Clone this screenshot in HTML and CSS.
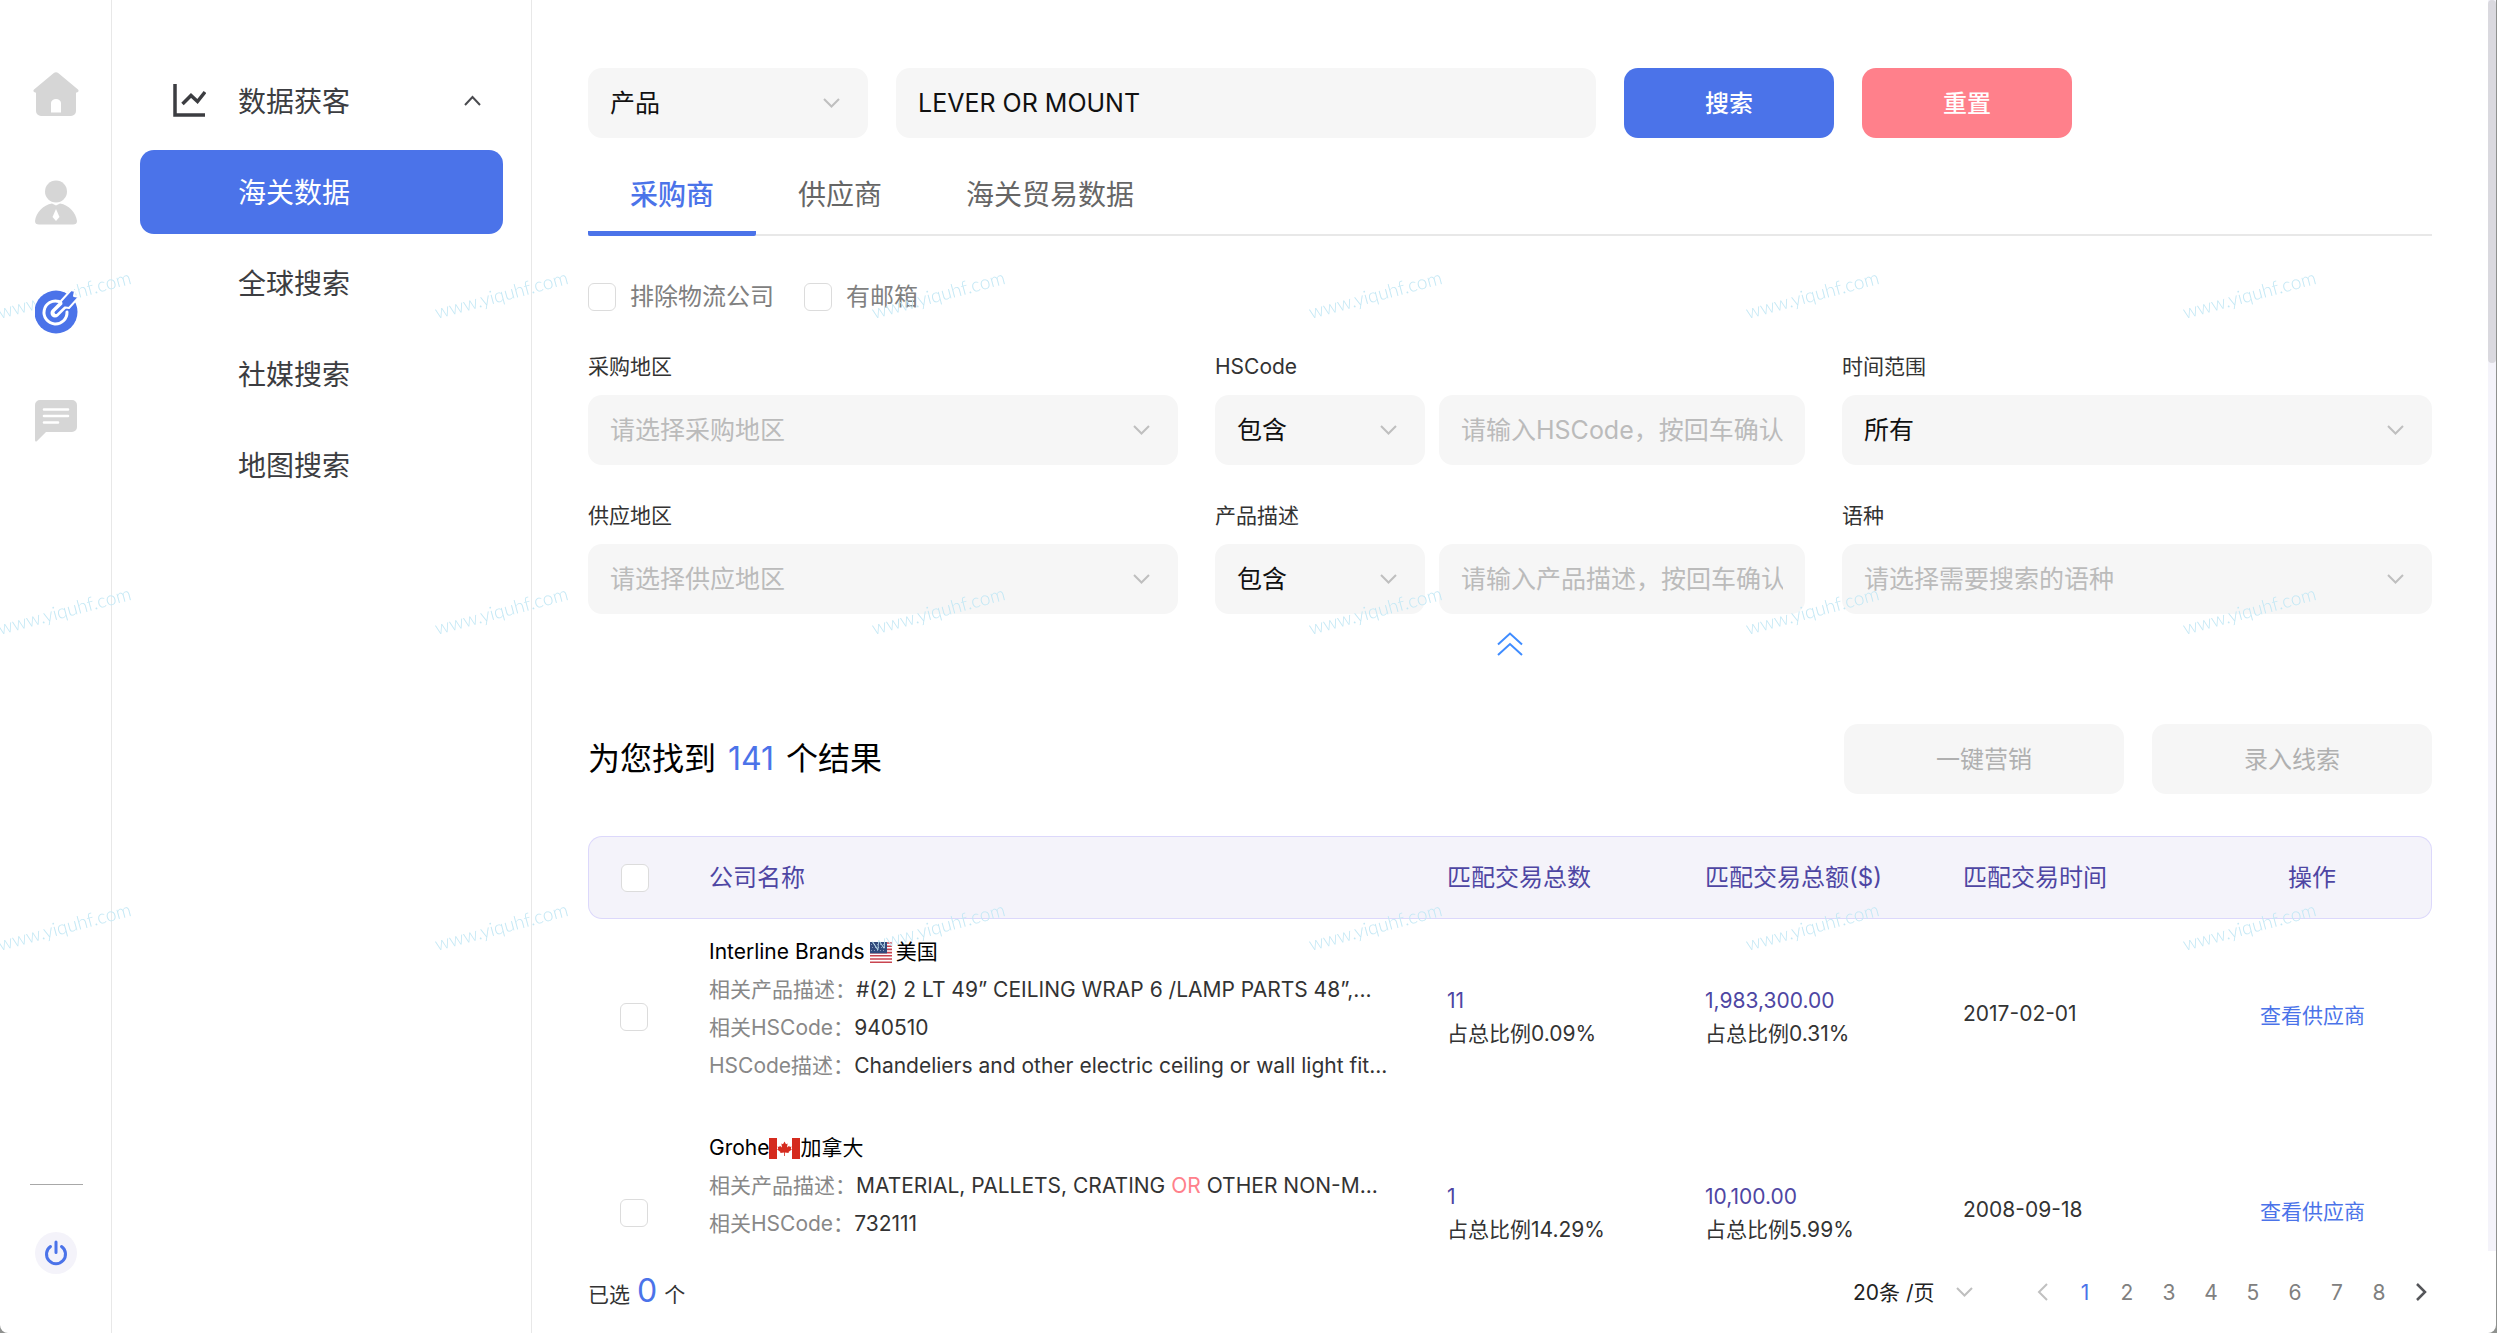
FILE: index.html
```html
<!DOCTYPE html>
<html lang="zh-CN">
<head>
<meta charset="utf-8">
<meta name="viewport" content="width=device-width, initial-scale=1">
<title>海关数据</title>
<link rel="stylesheet" href="styles.css">
</head>
<body>
<div class="app">
  <nav class="rail" aria-label="主导航">
    <a class="rail-link" href="#" aria-label="首页"><svg width="46" height="44" viewBox="0 0 46 44"><path fill="#d6d6d6" fill-rule="evenodd" d="M20.500 1.200a4 4 0 0 1 5 0L45 17.500q1.200 1.300 0 2.500l-2 .8V39a5 5 0 0 1-5 5H8a5 5 0 0 1-5-5V20.800L1 20q-1.200-1.200 0-2.500zM18 40.500h10V31a5 4 0 0 0-10 0z"/></svg></a>
    <a class="rail-link" href="#" aria-label="客户"><svg width="42" height="45" viewBox="0 0 42 45"><circle cx="21" cy="11.500" r="11" fill="#d6d6d6"/><path fill="#d6d6d6" fill-rule="evenodd" d="M17 23.500l4 2 4-2C34 25 41 33 42 41q0 3.500-4 3.500H4q-4 0-4-3.500C1 33 8 25 17 23.500zM21 29l-3.500 8 3.500 4 3.500-4z"/></svg></a>
    <a class="rail-link" href="#" aria-label="获客"><svg width="43" height="44" viewBox="0 0 43 44"><circle cx="21" cy="22" r="21.500" fill="#4b73e9"/><path d="M24 11.500A11.500 11.500 0 1 0 32 22" fill="none" stroke="#fff" stroke-width="3" stroke-linecap="round"/><path d="M20 23L31 12" stroke="#fff" stroke-width="9" stroke-linecap="round"/><path d="M26 11L36 0l4 1-1 5 5 1-10 11-7-1z" fill="#4b73e9" stroke="#fff" stroke-width="2" stroke-linejoin="round"/><path d="M21 22.500L33 11" stroke="#4b73e9" stroke-width="3" stroke-linecap="round"/></svg></a>
    <a class="rail-link" href="#" aria-label="消息"><svg width="42" height="42" viewBox="0 0 42 42"><path fill="#d6d6d6" d="M5 0h32a5 5 0 0 1 5 5v22a5 5 0 0 1-5 5H11L1.500 41.500Q0 42 0 40V5a5 5 0 0 1 5-5z"/><path d="M9 9.500h24M9 16h24M9 22.500h14" stroke="#fff" stroke-width="2.600" stroke-linecap="round"/></svg></a>
    <div class="rail-foot">
      <hr class="rail-rule">
      <button class="power" type="button" aria-label="退出"><svg width="24" height="26" viewBox="0 0 24 26"><path d="M6.500 6.500a9.500 9.500 0 1 0 11 0M12 2v10.500" fill="none" stroke="#4b73e9" stroke-width="3" stroke-linecap="round"/></svg></button>
    </div>
  </nav>

  <aside class="menu">
    <button class="menu-head" type="button">
      <svg class="menu-icon" width="33" height="33" viewBox="0 0 33 33"><path d="M2 0v31h30" fill="none" stroke="#3c3d41" stroke-width="3.500"/><path d="M9.500 20L18 11.500l6.500 6L32 8" fill="none" stroke="#3c3d41" stroke-width="3.500"/></svg>
      <span>数据获客</span>
      <svg class="menu-arrow" width="17" height="11" viewBox="0 0 17 11"><path d="M1 10l7.500-8L16 10" fill="none" stroke="#4a4b4f" stroke-width="2"/></svg>
    </button>
    <a class="menu-item menu-item-on" href="#">海关数据</a>
    <a class="menu-item" href="#">全球搜索</a>
    <a class="menu-item" href="#">社媒搜索</a>
    <a class="menu-item" href="#">地图搜索</a>
  </aside>

  <main class="main">
    <div class="scroller">
      <div class="content">
        <form class="search">
          <span class="pick search-kind"><select class="field" aria-label="搜索类型"><option>产品</option></select><svg class="caret" viewBox="0 0 17 10"><path d="M1 1l7.500 7.500L16 1"/></svg></span>
          <input class="field search-text" type="text" aria-label="关键词" value="LEVER OR MOUNT">
          <button class="btn btn-primary" type="button">搜索</button>
          <button class="btn btn-reset" type="reset">重置</button>
        </form>

        <div class="tabs" role="tablist">
          <button class="tab tab-on" type="button" role="tab" aria-selected="true">采购商</button>
          <button class="tab" type="button" role="tab">供应商</button>
          <button class="tab" type="button" role="tab">海关贸易数据</button>
        </div>

        <div class="checks">
          <label class="check"><input class="box" type="checkbox">排除物流公司</label>
          <label class="check"><input class="box" type="checkbox">有邮箱</label>
        </div>

        <div class="filters">
          <div class="filter">
            <label class="filter-name" for="buy-area">采购地区</label>
            <span class="pick"><select class="field field-empty" id="buy-area"><option>请选择采购地区</option></select><svg class="caret" viewBox="0 0 17 10"><path d="M1 1l7.500 7.500L16 1"/></svg></span>
          </div>
          <div class="filter">
            <label class="filter-name" for="hscode">HSCode</label>
            <div class="pair">
              <span class="pick"><select class="field" aria-label="HSCode 条件"><option>包含</option></select><svg class="caret" viewBox="0 0 17 10"><path d="M1 1l7.500 7.500L16 1"/></svg></span>
              <input class="field" id="hscode" type="text" placeholder="请输入HSCode，按回车确认">
            </div>
          </div>
          <div class="filter">
            <label class="filter-name" for="period">时间范围</label>
            <span class="pick"><select class="field" id="period"><option>所有</option></select><svg class="caret" viewBox="0 0 17 10"><path d="M1 1l7.500 7.500L16 1"/></svg></span>
          </div>
          <div class="filter">
            <label class="filter-name" for="sell-area">供应地区</label>
            <span class="pick"><select class="field field-empty" id="sell-area"><option>请选择供应地区</option></select><svg class="caret" viewBox="0 0 17 10"><path d="M1 1l7.500 7.500L16 1"/></svg></span>
          </div>
          <div class="filter">
            <label class="filter-name" for="product">产品描述</label>
            <div class="pair">
              <span class="pick"><select class="field" aria-label="产品描述 条件"><option>包含</option></select><svg class="caret" viewBox="0 0 17 10"><path d="M1 1l7.500 7.500L16 1"/></svg></span>
              <input class="field" id="product" type="text" placeholder="请输入产品描述，按回车确认">
            </div>
          </div>
          <div class="filter">
            <label class="filter-name" for="language">语种</label>
            <span class="pick"><select class="field field-empty" id="language"><option>请选择需要搜索的语种</option></select><svg class="caret" viewBox="0 0 17 10"><path d="M1 1l7.500 7.500L16 1"/></svg></span>
          </div>
        </div>
        <button class="fold" type="button" aria-label="收起筛选"><svg width="26" height="24" viewBox="0 0 26 24"><path d="M1 12.500L13 1.500l12 11M1 23l12-11 12 11" fill="none" stroke="#3f8cff" stroke-width="2"/></svg></button>

        <div class="result">
          <h1 class="result-title">为您找到<span class="result-count">141</span>个结果</h1>
          <button class="btn btn-off" type="button" disabled>一键营销</button>
          <button class="btn btn-off" type="button" disabled>录入线索</button>
        </div>

        <table class="list">
          <colgroup><col class="col-check"><col><col class="col-data"><col class="col-data"><col class="col-data"><col class="col-action"></colgroup>
          <thead>
            <tr><th><input class="box" type="checkbox" aria-label="全选"></th><th>公司名称</th><th>匹配交易总数</th><th>匹配交易总额($)</th><th>匹配交易时间</th><th class="action">操作</th></tr>
          </thead>
          <tbody>
            <tr>
              <td><input class="box" type="checkbox" aria-label="选择 Interline Brands"></td>
              <td class="company">
                <p class="company-name">Interline Brands<svg class="flag" width="31" height="21" viewBox="0 0 31 21"><path fill="#fff" d="M5 0h22v21H5z"/><path d="M5 1h22M5 4.200h22M5 7.400h22M5 10.600h22M5 13.800h22M5 17h22M5 20.200h22" stroke="#c94450" stroke-width="1.600"/><path fill="#2f4a7c" d="M5 0h17v11.400H5z"/><path d="M6 2.500h15M7 5.500h14M6 8.500h15" stroke="#8b9cbd" stroke-dasharray="1 2"/></svg>美国</p>
                <p class="line"><span class="key">相关产品描述：</span>#(2) 2 LT 49” CEILING WRAP 6 /LAMP PARTS 48”,...</p>
                <p class="line"><span class="key">相关HSCode：</span>940510</p>
                <p class="line"><span class="key">HSCode描述：</span>Chandeliers and other electric ceiling or wall light fit...</p>
              </td>
              <td><p class="num">11</p><p>占总比例0.09%</p></td>
              <td><p class="num">1,983,300.00</p><p>占总比例0.31%</p></td>
              <td class="date">2017-02-01</td>
              <td class="action"><a class="link" href="#">查看供应商</a></td>
            </tr>
            <tr>
              <td><input class="box" type="checkbox" aria-label="选择 Grohe"></td>
              <td class="company">
                <p class="company-name">Grohe<svg class="flag" width="31" height="21" viewBox="0 0 31 21"><path fill="#fff" d="M0 0h31v21H0z"/><path fill="#d52b1e" d="M0 0h8v21H0zM23 0h8v21h-8zM15.500 3.500l1.500 2.800 1.600-.8-.6 4 2.200-1.800.6 1.200 1.700-.3-.7 2 1 .8-3.300 2.500.3 1.200-3.900-.6V18h-.8v-3.500l-3.900.6.3-1.200-3.300-2.500 1-.8-.7-2 1.700.3.600-1.200L13 9.500l-.6-4 1.600.8z"/></svg>加拿大</p>
                <p class="line"><span class="key">相关产品描述：</span>MATERIAL, PALLETS, CRATING <em class="hit">OR</em> OTHER NON-M...</p>
                <p class="line"><span class="key">相关HSCode：</span>732111</p>
              </td>
              <td><p class="num">1</p><p>占总比例14.29%</p></td>
              <td><p class="num">10,100.00</p><p>占总比例5.99%</p></td>
              <td class="date">2008-09-18</td>
              <td class="action"><a class="link" href="#">查看供应商</a></td>
            </tr>
          </tbody>
        </table>
      </div>
      <div class="track"><div class="thumb"></div></div>
    </div>

    <footer class="foot">
      <p class="picked">已选<span class="picked-count">0</span>个</p>
      <span class="size"><select class="size-select" aria-label="每页条数"><option>20条 /页</option></select><svg class="caret size-caret" viewBox="0 0 17 10"><path d="M1 1l7.500 7.500L16 1"/></svg></span>
      <nav class="pages" aria-label="分页">
        <button class="page" type="button" aria-label="上一页" disabled><svg width="12" height="18" viewBox="0 0 12 18"><path d="M10 1L2 9l8 8" fill="none" stroke="#c0c0c0" stroke-width="2"/></svg></button>
        <a class="page page-on" href="#">1</a>
        <a class="page" href="#">2</a>
        <a class="page" href="#">3</a>
        <a class="page" href="#">4</a>
        <a class="page" href="#">5</a>
        <a class="page" href="#">6</a>
        <a class="page" href="#">7</a>
        <a class="page" href="#">8</a>
        <button class="page" type="button" aria-label="下一页"><svg width="12" height="18" viewBox="0 0 12 18"><path d="M2 1l8 8-8 8" fill="none" stroke="#55565a" stroke-width="2.500"/></svg></button>
      </nav>
    </footer>
  </main>

  <svg class="watermark" aria-hidden="true">
    <defs>
      <pattern id="mark" width="437" height="316" patternUnits="userSpaceOnUse" patternTransform="translate(-6 22)">
        <text class="mark-text" transform="translate(6 297) rotate(-15)">www.yiquhf.com</text>
      </pattern>
    </defs>
    <rect y="22" width="100%" height="948" fill="url(#mark)"/>
  </svg>
</div>
</body>
</html>
```
FILE: styles.css
```css
* { box-sizing: border-box; }

body {
  margin: 0;
  background: #8f918f;
  color: #333;
  font-family: "Inter", "Noto Sans CJK SC", sans-serif;
  font-size: 21px;
}

p, h1 { margin: 0; }
a { text-decoration: none; }
button, input, select { margin: 0; font-family: inherit; color: inherit; }
button { padding: 0; border: 0; background: none; cursor: pointer; }
svg { display: block; flex: none; }

.app {
  position: relative;
  display: flex;
  height: 100vh;
  margin-right: 1px;
  overflow: hidden;
  border-radius: 0 0 8px 8px;
  background: #fff;
}

/* icon rail */
.rail {
  display: flex;
  flex: none;
  flex-direction: column;
  align-items: center;
  width: 112px;
  padding: 39px 0 0 1px;
  border-right: 1px solid #e8e8e8;
}
.rail-link {
  position: relative;
  z-index: 2;
  display: flex;
  align-items: center;
  justify-content: center;
  width: 84px;
  height: 109px;
}
.rail-foot {
  display: flex;
  flex-direction: column;
  align-items: center;
  gap: 47px;
  margin-top: auto;
  padding-bottom: 59px;
}
.rail-rule { width: 53px; margin: 0; border: 0; border-top: 1px solid #a8a8a8; }
.power {
  display: flex;
  align-items: center;
  justify-content: center;
  width: 42px;
  height: 42px;
  border-radius: 50%;
  background: #f4f3fa;
}

/* section menu */
.menu {
  display: flex;
  flex: none;
  flex-direction: column;
  gap: 7px;
  width: 420px;
  padding: 59px 28px 0;
  border-right: 1px solid #e8e8e8;
  color: #3c3d41;
  font-size: 28px;
}
.menu-head {
  display: flex;
  align-items: center;
  height: 84px;
  padding: 0 22px 2px 33px;
  font-size: 28px;
}
.menu-icon { margin-right: 32px; }
.menu-arrow { margin-left: auto; }
.menu-item {
  height: 84px;
  padding: 1px 0 0 98px;
  border-radius: 14px;
  color: inherit;
  line-height: 84px;
}
.menu-item-on { background: #4b73e9; color: #fff; }

/* main column */
.main { display: flex; flex: 1; flex-direction: column; min-width: 0; }
.scroller { display: flex; flex: 1; min-height: 0; }
.content {
  flex: 1;
  min-width: 0;
  padding: 68px 56px 0;
  overflow-y: auto;
  scrollbar-width: none;
}
.track { flex: none; width: 8px; background: #f4f3fa; }
.thumb { height: 29%; border-radius: 4px; background: #dad9df; }

.field {
  width: 100%;
  min-width: 0;
  height: 70px;
  padding: 0 22px;
  border: 0;
  border-radius: 14px;
  outline: 0;
  appearance: none;
  background: #f6f6f6;
  color: #111;
  font-size: 25px;
}
.field::placeholder, .field-empty { color: #bbb; opacity: 1; }
.pick { position: relative; display: block; }
.caret {
  position: absolute;
  top: 50%;
  right: 28px;
  width: 17px;
  height: 10px;
  margin-top: -5px;
  fill: none;
  stroke: #bfbfbf;
  stroke-width: 2;
  pointer-events: none;
}

.btn {
  width: 280px;
  height: 70px;
  padding-bottom: 3px;
  border-radius: 14px;
  font-size: 24px;
}
.btn-primary, .btn-reset { width: 210px; color: #fff; font-weight: 500; }
.btn-primary { background: #4b73e9; }
.btn-reset { background: #ff808b; }
.btn-off { background: #f6f6f6; color: #b0b0b0; }

.search { display: flex; gap: 28px; }
.search-kind { width: 280px; }
.search-text { width: 700px; }

.tabs {
  display: flex;
  height: 84px;
  margin-top: 14px;
  border-bottom: 2px solid #e8e8e8;
}
.tab {
  height: 84px;
  padding: 2px 42px 0;
  border-bottom: 5px solid transparent;
  color: #666;
  font-size: 28px;
}
.tab-on {
  border-radius: 2px;
  border-bottom-color: #4b73e9;
  color: #4b73e9;
  font-weight: 500;
}

.checks { display: flex; gap: 30px; margin-top: 42px; }
.check {
  display: flex;
  align-items: center;
  gap: 14px;
  color: #808080;
  font-size: 24px;
  line-height: 38px;
}
.box {
  display: block;
  width: 28px;
  height: 28px;
  border: 1px solid #dcdcdc;
  border-radius: 6px;
  appearance: none;
  background: #fff;
}

.filters {
  display: grid;
  grid-template-columns: repeat(3, minmax(0, 1fr));
  gap: 37px;
  margin-top: 37px;
}
.filter-name { display: block; margin-bottom: 14px; line-height: 28px; }
.pair { display: grid; grid-template-columns: 210px minmax(0, 1fr); gap: 14px; }
.fold { display: block; margin: 18px auto 0; }

.result { display: flex; align-items: center; gap: 28px; margin-top: 68px; }
.result-title {
  margin-right: auto;
  padding-bottom: 6px;
  color: #000;
  font-size: 32px;
  font-weight: 400;
}
.result-count { margin: 0 12px; color: #4b73e9; }

/* result list */
.list {
  width: 100%;
  margin-top: 42px;
  border-spacing: 0;
  table-layout: fixed;
}
.col-check { width: 93px; }
.col-data { width: 258px; }
.col-action { width: 239px; }
.list th {
  height: 83px;
  padding: 0 0 4px 28px;
  border: solid #dcd8fb;
  border-width: 1px 0;
  background: #f4f3fa;
  color: #4e46a3;
  font-size: 24px;
  font-weight: 400;
  text-align: left;
}
.list th:first-child { padding: 0 0 0 32px; border-left-width: 1px; border-radius: 14px 0 0 14px; }
.list th:last-child { border-right-width: 1px; border-radius: 0 14px 14px 0; }
.list td { height: 196px; padding: 0 0 0 28px; line-height: 33px; }
.list td:first-child { padding-left: 32px; }
.list .company { padding: 14px 0 0 28px; line-height: 38px; vertical-align: top; }
.list .date { padding-bottom: 8px; }
.list .action { padding: 0 0 4px; text-align: center; }
.company-name { display: flex; align-items: center; color: #000; }
.line { white-space: nowrap; }
.key { color: #888; }
.hit { color: #ff808b; font-style: normal; }
.num { color: #4e46a3; }
.link { color: #4b73e9; }

/* footer bar */
.foot {
  display: flex;
  flex: none;
  align-items: center;
  height: 82px;
  padding: 0 54px 0 56px;
}
.picked { display: flex; align-items: baseline; margin-right: auto; padding-bottom: 3px; }
.picked-count { margin: 0 7px; color: #4b73e9; font-size: 32px; }
.size { position: relative; }
.size-select {
  width: 148px;
  height: 42px;
  padding: 0;
  border: 0;
  appearance: none;
  background: none;
  color: #222;
  font-size: 21px;
}
.size-caret { right: 28px; }
.pages { display: flex; margin-left: 21px; }
.page {
  display: flex;
  align-items: center;
  justify-content: center;
  width: 42px;
  height: 42px;
  color: #808080;
}
.page-on { color: #4b73e9; }

.watermark {
  position: absolute;
  inset: 0;
  z-index: 1;
  width: 100%;
  height: 100%;
  pointer-events: none;
}
.mark-text { fill: #c4e8f5; font-family: "Lato", sans-serif; font-size: 19px; font-weight: 300; }
```
